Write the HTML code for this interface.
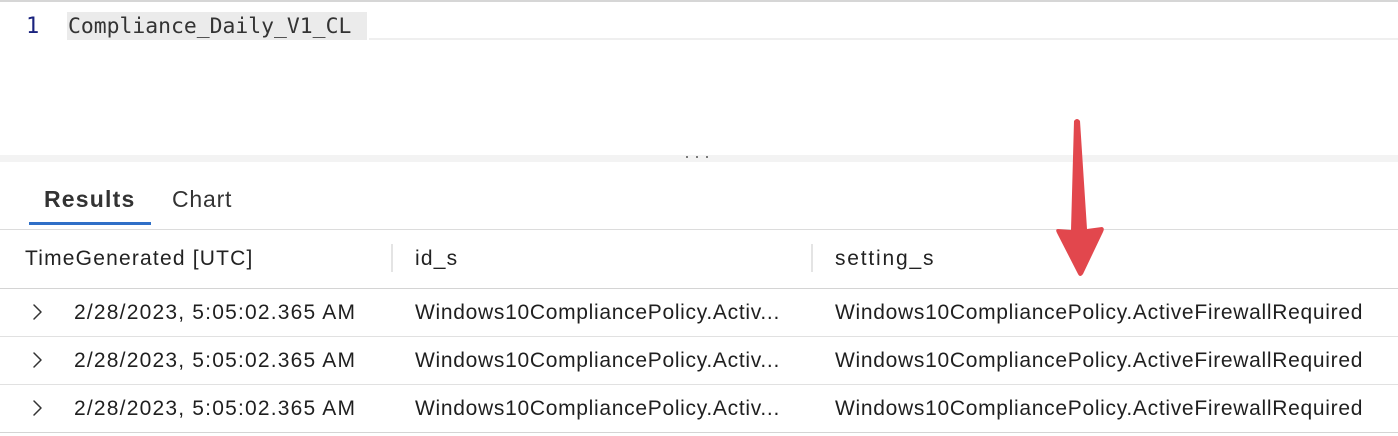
<!DOCTYPE html>
<html><head><style>
body{margin:0;width:1398px;height:436px;background:#fff;position:relative;overflow:hidden;font-family:"Liberation Sans",sans-serif;color:#222}
.a{position:absolute}
.t{position:absolute;font-size:21px;white-space:nowrap;color:#1f1f1f}
.ln{position:absolute;left:0;width:1398px;height:1px;background:#e1e1e1}
.h{letter-spacing:1.2px;top:247px;color:#222}
.w{letter-spacing:0.7px}
.d{letter-spacing:1.2px}
</style></head><body>
<div class="a" style="left:0;top:0;width:1398px;height:2px;background:#d6d6d6"></div>
<div class="a" style="left:369px;top:14px;width:1029px;height:24px;border-bottom:2px solid #efefef"></div>
<div class="a" style="left:67px;top:12px;width:300px;height:28px;background:#ebebeb"></div>
<div class="t" style="left:26px;top:14px;font-family:'DejaVu Sans Mono',monospace;font-size:22px;color:#1a237e">1</div>
<div class="t" style="left:68px;top:14px;font-family:'DejaVu Sans Mono','Liberation Mono',monospace;font-size:21.4px;color:#333">Compliance_Daily_V1_CL</div>
<div class="a" style="left:0;top:155px;width:1398px;height:7px;background:#f3f3f3"></div>
<svg class="a" style="left:0;top:0" width="1398" height="436">
<circle cx="687" cy="157" r="1" fill="#555"/><circle cx="697" cy="157" r="1" fill="#555"/><circle cx="707" cy="157" r="1" fill="#555"/>
</svg>
<div class="t" style="left:44px;top:186px;font-size:23px;font-weight:bold;color:#333;letter-spacing:1.2px">Results</div>
<div class="t" style="left:172px;top:186px;font-size:23px;color:#333;letter-spacing:0.8px">Chart</div>
<div class="a" style="left:29px;top:222px;width:122px;height:3px;background:#2f6fc7"></div>
<div class="ln" style="top:229px;background:#dcdcdc"></div>
<div class="t h" style="left:25px">TimeGenerated [UTC]</div>
<div class="a" style="left:391px;top:244px;width:2px;height:28px;background:#e4e4e4"></div>
<div class="t h" style="left:415px">id_s</div>
<div class="a" style="left:811px;top:244px;width:2px;height:28px;background:#e4e4e4"></div>
<div class="t h" style="left:835px;letter-spacing:1.8px">setting_s</div>
<div class="ln" style="top:288px;background:#d4d4d4"></div>
<div class="ln" style="top:336px"></div>
<div class="ln" style="top:384px"></div>
<div class="ln" style="top:432px;background:#d4d4d4"></div>
<svg class="a" style="left:0;top:0" width="1398" height="436" fill="none" stroke="#333" stroke-width="1.5" stroke-linecap="round" stroke-linejoin="round">
<path d="M34 305 L41 312 L34 319"/><path d="M34 353 L41 360 L34 367"/><path d="M34 401 L41 408 L34 415"/>
</svg>
<div class="t d" style="left:74px;top:301px">2/28/2023, 5:05:02.365 AM</div>
<div class="t w" style="left:415px;top:301px">Windows10CompliancePolicy.Activ...</div>
<div class="t w" style="left:835px;top:301px">Windows10CompliancePolicy.ActiveFirewallRequired</div>
<div class="t d" style="left:74px;top:349px">2/28/2023, 5:05:02.365 AM</div>
<div class="t w" style="left:415px;top:349px">Windows10CompliancePolicy.Activ...</div>
<div class="t w" style="left:835px;top:349px">Windows10CompliancePolicy.ActiveFirewallRequired</div>
<div class="t d" style="left:74px;top:397px">2/28/2023, 5:05:02.365 AM</div>
<div class="t w" style="left:415px;top:397px">Windows10CompliancePolicy.Activ...</div>
<div class="t w" style="left:835px;top:397px">Windows10CompliancePolicy.ActiveFirewallRequired</div>
<svg class="a" style="left:0;top:0" width="1398" height="436"><path d="M1074 121 Q1077 117 1080 121 L1087 229 L1102 227 Q1105 228 1103 232 L1083 274 Q1080 278 1078 274 L1057 233 Q1055 229 1058 229 L1071 230 Z" fill="#e2474d"/></svg>
</body></html>
